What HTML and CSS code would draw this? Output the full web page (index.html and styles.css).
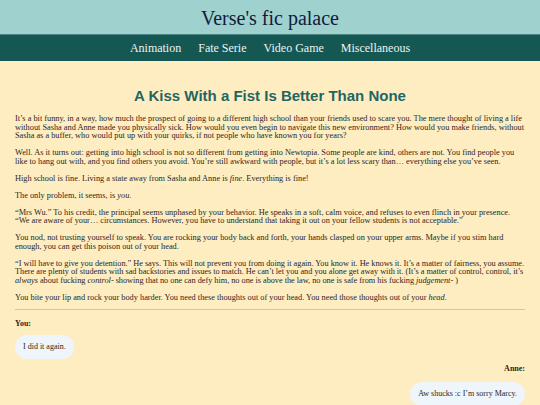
FILE: index.html
```html
<!DOCTYPE html>
<html>
<head>
<meta charset="UTF-8">
<meta name="viewport" content="width=device-width, initial-scale=1.0"/>
<title>A Kiss With a Fist Is Better Than None</title>
<link rel="stylesheet" href="styles.css">
</head>
<body>

<header class="top">
<div class="sitename">Verse's fic palace</div>
</header>

<nav class="menu">
<a href="#">Animation</a>
<a href="#">Fate Serie</a>
<a href="#">Video Game</a>
<a href="#">Miscellaneous</a>
</nav>

<div id="container">

<h1>A Kiss With a Fist Is Better Than None</h1>

<div class="story">
<p>It’s a bit funny, in a way, how much the prospect of going to a different high school than your friends used to scare you. The mere thought of living a life without Sasha and Anne made you physically sick. How would you even begin to navigate this new environment? How would you make friends, without Sasha as a buffer, who would put up with your quirks, if not people who have known you for years?</p>

<p>Well. As it turns out: getting into high school is not so different from getting into Newtopia. Some people are kind, others are not. You find people you like to hang out with, and you find others you avoid. You’re still awkward with people, but it’s a lot less scary than… everything else you’ve seen.</p>

<p>High school is fine. Living a state away from Sasha and Anne is <i>fine</i>. Everything is fine!</p>

<p>The only problem, it seems, is <i>you</i>.</p>

<p>“Mrs Wu.” To his credit, the principal seems unphased by your behavior. He speaks in a soft, calm voice, and refuses to even flinch in your presence. “We are aware of your… circumstances. However, you have to understand that taking it out on your fellow students is not acceptable.”</p>

<p>You nod, not trusting yourself to speak. You are rocking your body back and forth, your hands clasped on your upper arms. Maybe if you stim hard enough, you can get this poison out of your head.</p>

<p class="tight">“I will have to give you detention.” He says. This will not prevent you from doing it again. You know it. He knows it. It’s a matter of fairness, you assume. There are plenty of students with sad backstories and issues to match. He can’t let you and you alone get away with it. (It’s a matter of control, control, it’s <i>always</i> about fucking <i>control</i>- showing that no one can defy him, no one is above the law, no one is safe from his fucking <i>judgement</i>- )</p>

<p>You bite your lip and rock your body harder. You need these thoughts out of your head. You need those thoughts out of your <i>head</i>.</p>
</div>

<hr>

<div class="chat">
<div class="msg you">
<div class="who">You:</div>
<div class="bubble">I did it again.</div>
</div>
<div class="msg anne">
<div class="who">Anne:</div>
<div class="bubble">Aw shucks :c I’m sorry Marcy.</div>
</div>
</div>

</div>
</body>
</html>
```

FILE: styles.css
```css
*{
box-sizing: border-box;
margin:0; padding:0;
}

body{
background: #ffedc2;
font-family: "Liberation Serif", Georgia, serif;
color: #2c261d;
}

/*---- header ----*/
.top{
background: #9fd1cf;
height: 35px;
display: flex;
align-items: center;
justify-content: center;
border-bottom: 1px solid #4c8682;
}

.sitename{
font-size: 20px;
color: #101c3a;
padding-top: 2px;
}

.menu{
background: #155753;
height: 26px;
display: flex;
align-items: center;
justify-content: center;
gap: 17px;
}

.menu a{
font-size: 12px;
color: #eef3ef;
text-decoration: none;
}

/*---- content ----*/
#container{
padding: 0 15px;
}

h1{
font: bold 15px "Liberation Sans", Arial, sans-serif;
color: #1f6661;
text-align: center;
margin: 26px 0 11px;
}

.story{
font-size: 8.3px;
line-height: 8.5px;
}

.story p{
margin-bottom: 8.5px;
}

.story p:last-child{
margin-bottom: 7px;
}

.story p.tight{
letter-spacing: -0.03px;
}

hr{
border: none;
border-top: 1px solid #d6c49b;
margin: 0 0 9px;
}

/*---- chat ----*/
.msg{
display: flex;
flex-direction: column;
align-items: flex-start;
font-size: 8px;
}

.msg.anne{
align-items: flex-end;
margin-top: 5px;
}

.who{
font-weight: bold;
line-height: 9px;
margin-bottom: 7px;
}

.anne .who{
margin-bottom: 9px;
}

.bubble{
background: #eef5fb;
border-radius: 12px;
padding: 8px 8px;
line-height: 8px;
}
```
